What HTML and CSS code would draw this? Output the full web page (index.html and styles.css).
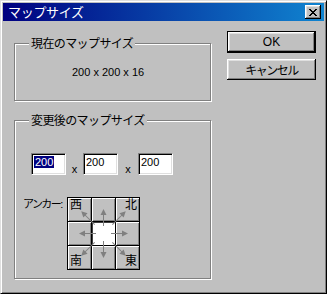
FILE: index.html
```html
<!DOCTYPE html>
<html lang="ja">

<head>
  <meta charset="UTF-8" />
  <title>マップサイズ</title>
  <link rel="stylesheet" href="styles.css">
</head>

<body>
  <div class="window">
    <div class="titlebar">
      <span class="title">マップサイズ</span>
      <div class="close-btn">
        <svg width="8" height="7" viewBox="0 0 8 7" shape-rendering="crispEdges">
          <path fill="#000" d="M0 0h2v1H0z M6 0h2v1H6z M1 1h2v1H1z M5 1h2v1H5z M2 2h4v1H2z M3 3h2v1H3z M2 4h4v1H2z M1 5h2v1H1z M5 5h2v1H5z M0 6h2v1H0z M6 6h2v1H6z" />
        </svg>
      </div>
    </div>

    <div class="content">
      <div class="groups">
        <div class="group group-current">
          <span class="group-title">現在のマップサイズ</span>
          <div class="current-size">200 x 200 x 16</div>
        </div>

        <div class="group group-new">
          <span class="group-title">変更後のマップサイズ</span>
          <div class="size-row">
            <div class="field"><span class="selected">200</span></div>
            <span class="times">x</span>
            <div class="field">200</div>
            <span class="times wide">x</span>
            <div class="field">200</div>
          </div>
          <div class="anchor-row">
            <span class="anchor-label">アンカー:</span>
            <div class="anchor-grid">
              <div class="cell top-left">西</div>
              <div class="cell"></div>
              <div class="cell top-right">北</div>
              <div class="cell"></div>
              <div class="cell center"></div>
              <div class="cell"></div>
              <div class="cell bottom-left">南</div>
              <div class="cell"></div>
              <div class="cell bottom-right">東</div>
              <svg class="arrows" width="73" height="73" viewBox="0 0 73 73">
                <g id="straight" stroke="#808080" fill="#808080">
                  <line x1="36.5" y1="29" x2="36.5" y2="17" />
                  <polygon stroke="none" points="36.5,12 33.5,18 39.5,18" />
                </g>
                <use href="#straight" transform="rotate(90 36.5 36.5)" />
                <use href="#straight" transform="rotate(180 36.5 36.5)" />
                <use href="#straight" transform="rotate(270 36.5 36.5)" />
                <g id="diagonal" stroke="#808080" fill="#808080" transform="rotate(-45 36.5 36.5)">
                  <line x1="36.5" y1="24" x2="36.5" y2="10" />
                  <polygon stroke="none" points="36.5,5 33.5,11 39.5,11" />
                </g>
                <use href="#diagonal" transform="rotate(90 36.5 36.5)" />
                <use href="#diagonal" transform="rotate(180 36.5 36.5)" />
                <use href="#diagonal" transform="rotate(270 36.5 36.5)" />
              </svg>
            </div>
          </div>
        </div>
      </div>

      <div class="buttons">
        <div class="btn btn-default">OK</div>
        <div class="btn">キャンセル</div>
      </div>
    </div>
  </div>
</body>

</html>
```

FILE: styles.css
```css
body {
  margin: 0;
  background: #c0c0c0;
  font-family: "Liberation Sans", "Noto Sans CJK JP", sans-serif;
  font-size: 12px;
  color: #000;
}

.window {
  width: 327px;
  height: 294px;
  box-sizing: border-box;
  padding: 2px;
  background: #c0c0c0;
  border: 1px solid;
  border-color: #dfdfdf #000 #000 #dfdfdf;
  box-shadow: inset 1px 1px #fff, inset -1px -1px #808080;
}

.titlebar {
  height: 18px;
  display: flex;
  align-items: center;
  justify-content: space-between;
  padding: 0 3px 0 5px;
  background: linear-gradient(to right, #000080, #1084d0);
}

.title {
  color: #fff;
  font-size: 13px;
  line-height: 15px;
  letter-spacing: -0.3px;
}

.close-btn {
  width: 16px;
  height: 14px;
  display: flex;
  align-items: center;
  justify-content: center;
  background: #c0c0c0;
  box-shadow: inset -1px -1px #000, inset 1px 1px #fff, inset -2px -2px #808080, inset 2px 2px #dfdfdf;
}

.content {
  display: flex;
  padding: 10px 0 0 11px;
}

.groups {
  margin-top: 12px;
  width: 197px;
}

.group {
  box-sizing: border-box;
  border: 1px solid #808080;
  box-shadow: 1px 1px #fff, inset 1px 1px #fff;
}

.group-title {
  display: table;
  margin: -7px 0 0 14px;
  padding: 0 2px;
  background: #c0c0c0;
  line-height: 14px;
  letter-spacing: -0.6px;
}

.group-current {
  height: 58px;
}

.current-size {
  margin-top: 15px;
  padding-left: 57px;
  font-size: 11px;
  line-height: 13px;
}

.group-new {
  height: 159px;
  margin-top: 19px;
}

.size-row {
  display: flex;
  align-items: flex-end;
  margin-top: 25px;
  padding-left: 16px;
}

.field {
  width: 35px;
  height: 22px;
  box-sizing: border-box;
  padding: 2px 0 0 2px;
  background: #fff;
  border: 1px solid;
  border-color: #808080 #fff #fff #808080;
  box-shadow: inset 1px 1px #000, inset -1px -1px #dfdfdf;
  font-size: 11px;
  line-height: 12px;
}

.selected {
  background: #000080;
  color: #fff;
  padding: 0 1px;
}

.times {
  width: 17px;
  text-align: center;
  font-size: 11px;
  line-height: 11px;
}

.times.wide {
  width: 20px;
}

.anchor-row {
  display: flex;
  align-items: flex-start;
  margin-top: 22px;
  padding-left: 8px;
}

.anchor-label {
  width: 44px;
  font-size: 11px;
  line-height: 14px;
  letter-spacing: -1.6px;
}

.anchor-grid {
  position: relative;
  display: grid;
  grid-template-columns: repeat(3, 23px);
  grid-template-rows: repeat(3, 23px);
  gap: 1px;
  padding: 1px;
  background: #000;
}

.cell {
  display: flex;
  background: #c0c0c0;
  box-shadow: inset 1px 1px #fff, inset -1px -1px #808080;
  line-height: 13px;
  font-size: 12px;
}

.cell.center {
  background: #fff;
  box-shadow: inset 1px 1px #404040;
}

.top-left {
  padding: 1px 0 0 2px;
}

.top-right {
  justify-content: flex-end;
  padding: 1px 2px 0 0;
}

.bottom-left {
  align-items: flex-end;
  padding: 0 0 1px 2px;
}

.bottom-right {
  justify-content: flex-end;
  align-items: flex-end;
  padding: 0 2px 1px 0;
}

.arrows {
  position: absolute;
  left: 0;
  top: 0;
}

.buttons {
  margin-left: 16px;
  display: flex;
  flex-direction: column;
  gap: 6px;
}

.btn {
  width: 89px;
  height: 21px;
  box-sizing: border-box;
  display: flex;
  align-items: center;
  justify-content: center;
  background: #c0c0c0;
  box-shadow: inset -1px -1px #000, inset 1px 1px #fff, inset -2px -2px #808080, inset 2px 2px #dfdfdf;
  letter-spacing: -1.5px;
}

.btn-default {
  height: 22px;
  border: 1px solid #000;
  letter-spacing: 0;
}
```
